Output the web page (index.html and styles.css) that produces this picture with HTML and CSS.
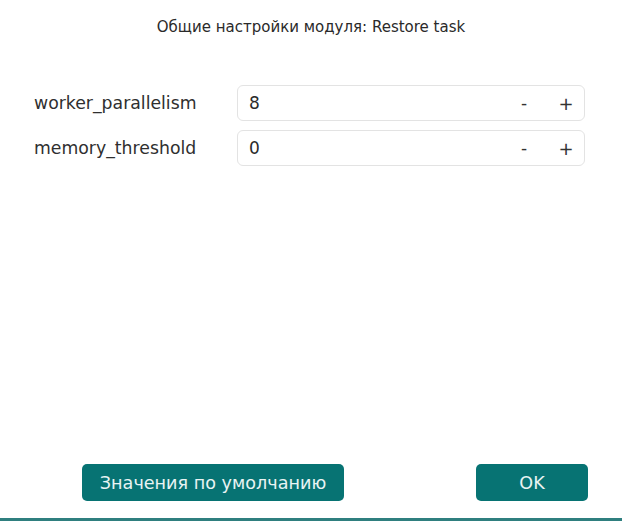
FILE: index.html
```html
<!DOCTYPE html>
<html>
<head>
<meta charset="utf-8">
<link rel="stylesheet" href="styles.css">
</head>
<body>
<div class="dialog">
  <div class="title">Общие настройки модуля: Restore task</div>
  <div class="fields">
    <div class="row">
      <div class="label">worker_parallelism</div>
      <div class="spin">
        <span class="value">8</span>
        <span class="btn minus">-</span>
        <span class="btn plus">+</span>
      </div>
    </div>
    <div class="row">
      <div class="label">memory_threshold</div>
      <div class="spin">
        <span class="value">0</span>
        <span class="btn minus">-</span>
        <span class="btn plus">+</span>
      </div>
    </div>
  </div>
  <div class="footer">
    <button class="action default">Значения по умолчанию</button>
    <button class="action ok">OK</button>
  </div>
</div>
</body>
</html>
```
FILE: styles.css
```css
html, body {
  margin: 0;
  padding: 0;
  background: #ffffff;
}
body {
  font-family: "DejaVu Sans", sans-serif;
  color: #2b2b2b;
}
.dialog {
  width: 622px;
  height: 521px;
  box-sizing: border-box;
  display: flex;
  flex-direction: column;
  border-bottom: 3px solid #2f7f7f;
}
.title {
  font-family: "DejaVu Sans", sans-serif;
  font-size: 15px;
  text-align: center;
  padding-top: 18px;
  height: 66px;
  box-sizing: border-box;
  color: #2a2a2a;
}
.fields {
  display: flex;
  flex-direction: column;
  gap: 9px;
  padding-left: 34px;
  padding-right: 37px;
  padding-top: 19px;
}
.row {
  display: flex;
  align-items: center;
}
.label {
  width: 203px;
  font-size: 17.3px;
  color: #2f2f2f;
}
.spin {
  flex: 1;
  height: 36px;
  box-sizing: border-box;
  border: 1px solid #e3e3e3;
  border-radius: 6px;
  display: flex;
  align-items: center;
  padding-left: 11px;
  font-size: 17px;
}
.value {
  flex: 1;
}
.btn {
  width: 20px;
  text-align: center;
  font-size: 17px;
  color: #333;
}
.minus {
  margin-right: 22px;
}
.plus {
  margin-right: 8px;
  font-size: 18px;
}
.footer {
  margin-top: auto;
  display: flex;
  justify-content: space-between;
  padding-left: 82px;
  padding-right: 34px;
  padding-bottom: 17px;
}
.action {
  height: 37px;
  border: none;
  border-radius: 5px;
  background: #077373;
  color: #e9f3f3;
  font-family: "DejaVu Sans", sans-serif;
  font-size: 17.6px;
  padding: 0;
}
.default {
  width: 262px;
}
.ok {
  width: 112px;
}
```
